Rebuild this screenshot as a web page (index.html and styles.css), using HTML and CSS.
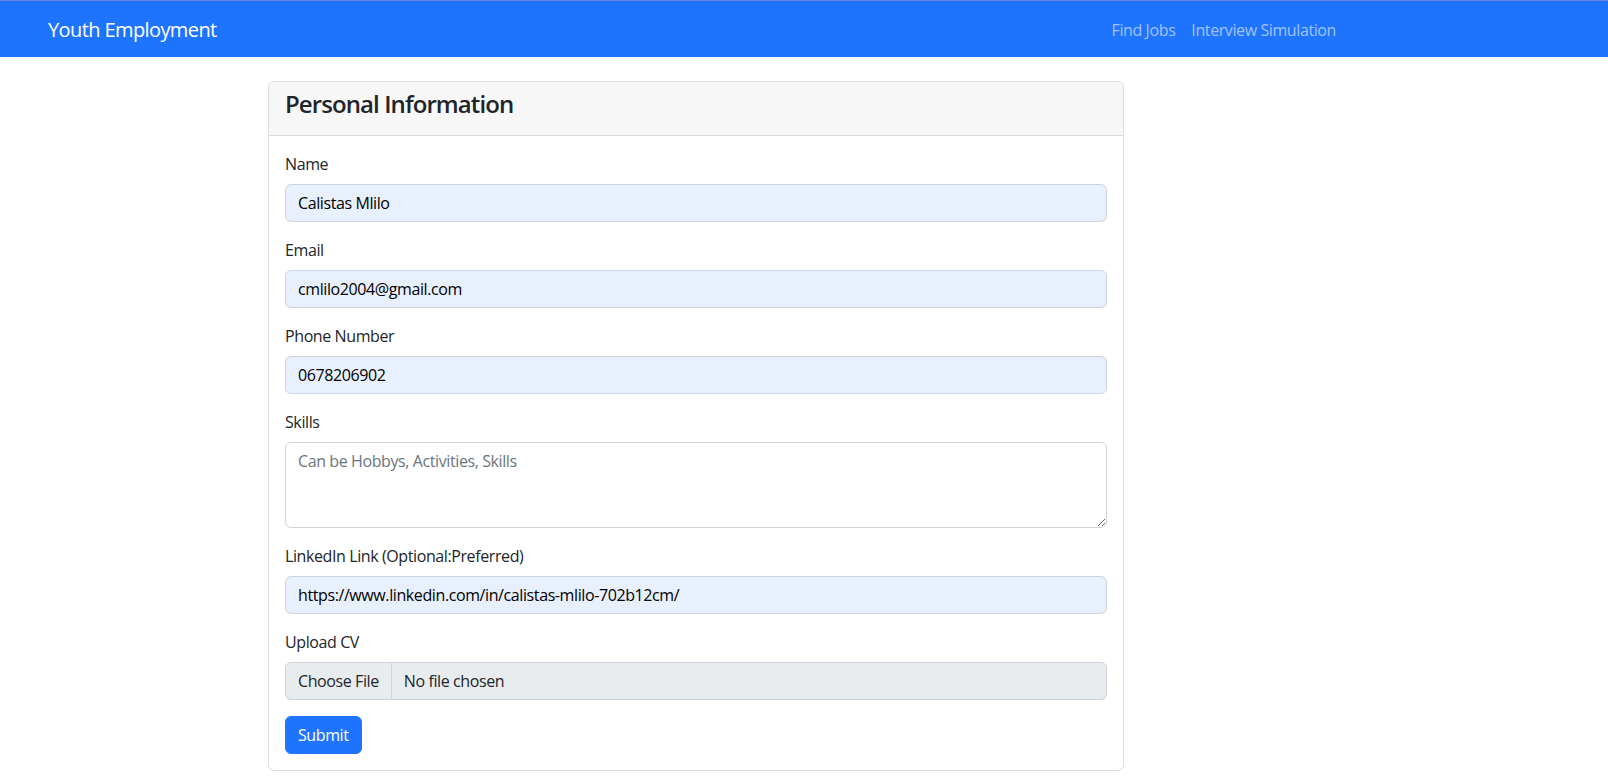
FILE: index.html
```html
<!DOCTYPE html>
<html lang="en">
<head>
<meta charset="utf-8">
<title>Youth Employment</title>
<link rel="stylesheet" href="styles.css">
</head>
<body>
<nav class="navbar">
  <a class="brand" href="#">Youth Employment</a>
  <ul class="nav">
    <li><a class="nav-link" href="#">Find Jobs</a></li>
    <li><a class="nav-link" href="#">Interview Simulation</a></li>
  </ul>
</nav>
<main class="page">
  <section class="card">
    <div class="card-header">
      <h4 class="card-title">Personal Information</h4>
    </div>
    <form class="card-body">
      <div class="field">
        <label class="form-label" for="name">Name</label>
        <input class="form-control filled" id="name" type="text" value="Calistas Mlilo">
      </div>
      <div class="field">
        <label class="form-label" for="email">Email</label>
        <input class="form-control filled" id="email" type="email" value="cmlilo2004@gmail.com">
      </div>
      <div class="field">
        <label class="form-label" for="phone">Phone Number</label>
        <input class="form-control filled" id="phone" type="text" value="0678206902">
      </div>
      <div class="field">
        <label class="form-label" for="skills">Skills</label>
        <textarea class="form-control textarea" id="skills" rows="3" placeholder="Can be Hobbys, Activities, Skills"></textarea>
      </div>
      <div class="field">
        <label class="form-label" for="linkedin">LinkedIn Link (Optional:Preferred)</label>
        <input class="form-control filled" id="linkedin" type="text" value="https://www.linkedin.com/in/calistas-mlilo-702b12cm/">
      </div>
      <div class="field">
        <span class="form-label">Upload CV</span>
        <label class="file-control">
          <span class="file-btn">Choose File</span>
          <span class="file-name">No file chosen</span>
        </label>
      </div>
      <button class="btn" type="button">Submit</button>
    </form>
  </section>
</main>
</body>
</html>
```
FILE: styles.css
```css
* { box-sizing: border-box; }

html, body {
  margin: 0;
  padding: 0;
  background: #fff;
}

body {
  font-family: "Open Sans", "Noto Sans", "Liberation Sans", sans-serif;
  font-size: 16px;
  line-height: 1.5;
  color: #212529;
  letter-spacing: -0.025em;
}

.navbar {
  display: flex;
  align-items: center;
  height: 57px;
  border-top: 1px solid #6b7fe3;
  background: #1f74fd;
  padding: 1px 264px 0 48px;
}

.brand {
  color: #fff;
  font-size: 20px;
  line-height: 30px;
  letter-spacing: -0.03em;
  text-decoration: none;
  padding: 5px 0;
}

.nav {
  display: flex;
  list-style: none;
  margin: 0 0 0 auto;
  padding: 0;
}

.nav-link {
  display: block;
  padding: 8px;
  color: rgba(255, 255, 255, 0.58);
  text-decoration: none;
  line-height: 24px;
}

.page {
  padding: 24px 0 0 268px;
}

.card {
  width: 856px;
  border: 1px solid #dcdcdc;
  border-radius: 6px;
  background: #fff;
  overflow: hidden;
}

.card-header {
  background: #f7f7f7;
  border-bottom: 1px solid #dcdcdc;
  padding: 8px 16px;
}

.card-title {
  margin: 0 0 8px;
  font-size: 24px;
  font-weight: 600;
  line-height: 1.2;
  letter-spacing: -0.038em;
  color: #212529;
}

.card-body {
  padding: 16px;
  margin: 0;
}

.field {
  margin-bottom: 16px;
}

.form-label {
  display: block;
  margin-bottom: 8px;
  line-height: 24px;
}

.form-control {
  display: block;
  width: 100%;
  height: 38px;
  padding: 6px 12px;
  font: inherit;
  letter-spacing: inherit;
  line-height: 24px;
  color: #000;
  background: #fff;
  border: 1px solid #ced4da;
  border-radius: 6px;
  outline: none;
}

.filled {
  background: #e8f0fe;
}

.textarea {
  height: 86px;
  resize: vertical;
  color: #212529;
}

.textarea::placeholder {
  color: #6c757d;
  opacity: 1;
}

.file-control {
  display: flex;
  align-items: stretch;
  height: 38px;
  border: 1px solid #ced4da;
  border-radius: 6px;
  background: #e9ecef;
  overflow: hidden;
}

.file-btn {
  padding: 6px 12px;
  line-height: 24px;
  border-right: 1px solid #ced4da;
  color: #212529;
}

.file-name {
  padding: 6px 12px;
  line-height: 24px;
  color: #212529;
}

.btn {
  display: inline-block;
  height: 38px;
  padding: 6px 12px;
  font: inherit;
  letter-spacing: inherit;
  line-height: 24px;
  color: #fff;
  background: #1f74fd;
  border: 1px solid #1f74fd;
  border-radius: 6px;
  cursor: pointer;
}
```
